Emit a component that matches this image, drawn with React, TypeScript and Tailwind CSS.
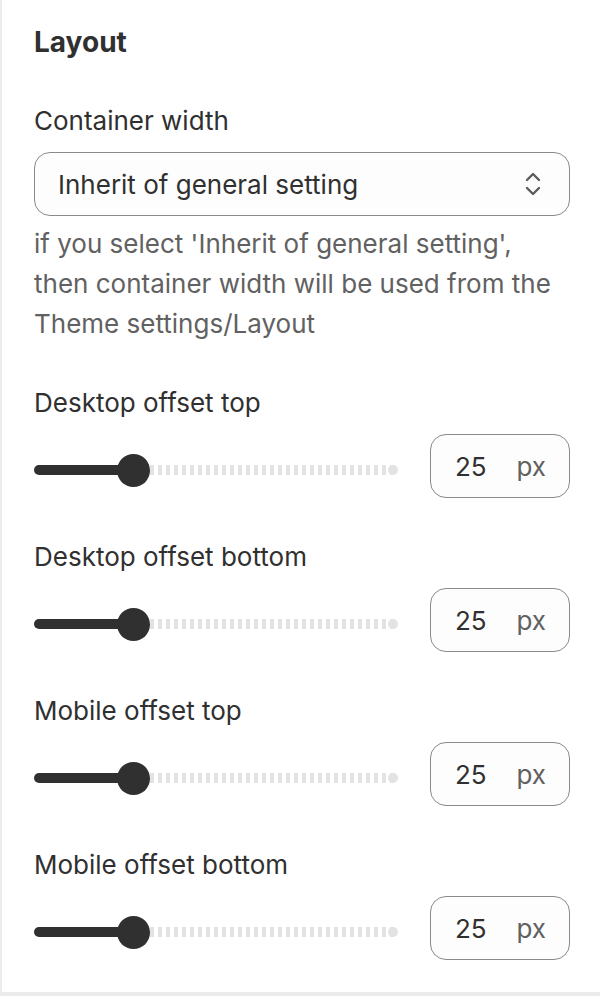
import React from 'react';

const sliders = [
  { label: 'Desktop offset top', value: 25 },
  { label: 'Desktop offset bottom', value: 25 },
  { label: 'Mobile offset top', value: 25 },
  { label: 'Mobile offset bottom', value: 25 },
];

const RangeRow: React.FC<{ label: string; value: number }> = ({ label, value }) => (
  <div className="flex flex-col">
    <label className="text-[26px] leading-[40px] text-[#303030]">{label}</label>
    <div className="mt-[11px] flex items-center gap-[32px]">
      <div className="relative h-[64px] flex-1">
        <div className="absolute left-0 top-[31px] h-[10px] w-[100px] rounded-full bg-[#303030]" />
        <div className="absolute left-[116px] right-[4px] top-[31px] h-[10px] bg-[repeating-linear-gradient(90deg,#e3e3e3_0_4px,transparent_4px_8px)]" />
        <div className="absolute right-0 top-[31px] h-[10px] w-[10px] rounded-full bg-[#e3e3e3]" />
        <div className="absolute left-[83px] top-[20px] h-[33px] w-[33px] rounded-full bg-[#303030]" />
      </div>
      <div className="flex h-[64px] w-[140px] items-center justify-between rounded-[16px] border border-[#8a8a8a] bg-[#fdfdfd] pl-[24px] pr-[23px]">
        <span className="text-[26px] text-[#303030]">{value}</span>
        <span className="text-[26px] text-[#616161]">px</span>
      </div>
    </div>
  </div>
);

export default function App() {
  return (
    <div className="min-h-[996px] bg-[#ebebeb] font-['Inter','Noto_Sans',sans-serif]">
      <div className="ml-[2px] flex h-[992px] flex-col bg-white pl-[32px] pr-[30px] pt-[22px]">
        <h2 className="text-[28px] font-bold leading-[40px] text-[#303030]">Layout</h2>

        <label className="mt-[39px] text-[26px] leading-[40px] text-[#303030]">Container width</label>
        <div className="mt-[11px] flex h-[64px] items-center justify-between rounded-[16px] border border-[#8a8a8a] bg-[#fdfdfd] pl-[23px] pr-[26px]">
          <span className="text-[26px] text-[#303030]">Inherit of general setting</span>
          <svg width="20" height="28" viewBox="0 0 20 28" fill="none" stroke="#5c5c5c" strokeWidth="2.4" strokeLinecap="round" strokeLinejoin="round">
            <path d="M4 10 L10 4 L16 10" />
            <path d="M4 18 L10 24 L16 18" />
          </svg>
        </div>
        <p className="mt-[8px] text-[26px] leading-[40px] text-[#616161]">
          if you select 'Inherit of general setting', then container width will be used from the Theme settings/Layout
        </p>

        <div className="mt-[39px] flex flex-col gap-[39px]">
          {sliders.map((s) => (
            <RangeRow key={s.label} label={s.label} value={s.value} />
          ))}
        </div>
      </div>
    </div>
  );
}
